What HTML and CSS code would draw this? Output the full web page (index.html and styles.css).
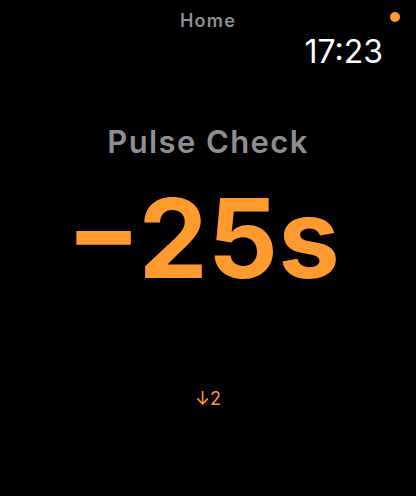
FILE: index.html
```html
<!DOCTYPE html>
<html lang="en">
<head>
    <meta charset="UTF-8">
    <meta name="viewport" content="width=device-width, initial-scale=1.0">
    <title>Pulse Check</title>
    <link rel="stylesheet" href="styles.css">
</head>
<body>
    <div class="screen">
        <div class="status-dot"></div>
        <div class="nav-title">Home</div>
        <div class="clock">17:23</div>
        <div class="timer-label">Pulse Check</div>
        <div class="timer-value">&minus;25s</div>
        <div class="step-hint">&darr;2</div>
    </div>
</body>
</html>
```

FILE: styles.css
```css
body {
    margin: 0;
    background-color: #000;
    font-family: Inter, "Noto Sans", sans-serif;
}
.screen {
    position: relative;
    display: flex;
    flex-direction: column;
    align-items: center;
    width: 416px;
    height: 496px;
    padding-top: 10px;
    box-sizing: border-box;
}
.status-dot {
    position: absolute;
    top: 12px;
    left: 390px;
    width: 10px;
    height: 10px;
    border-radius: 50%;
    background-color: #ff9a2f;
}
.nav-title {
    font-size: 18px;
    line-height: 22px;
    font-weight: 600;
    letter-spacing: 1.2px;
    color: #8e8e93;
}
.clock {
    align-self: flex-end;
    margin-top: 1px;
    margin-right: 33px;
    font-size: 32px;
    line-height: 38px;
    color: #fff;
}
.timer-label {
    margin-top: 52px;
    font-size: 31px;
    line-height: 37px;
    font-weight: 600;
    letter-spacing: 1.4px;
    color: #8e8e93;
}
.timer-value {
    margin-top: 18px;
    margin-right: 10px;
    font-size: 110px;
    line-height: 120px;
    font-weight: 700;
    color: #ff9a2f;
}
.step-hint {
    margin-top: 90px;
    font-size: 18px;
    line-height: 22px;
    color: #ff9a2f;
}
```
